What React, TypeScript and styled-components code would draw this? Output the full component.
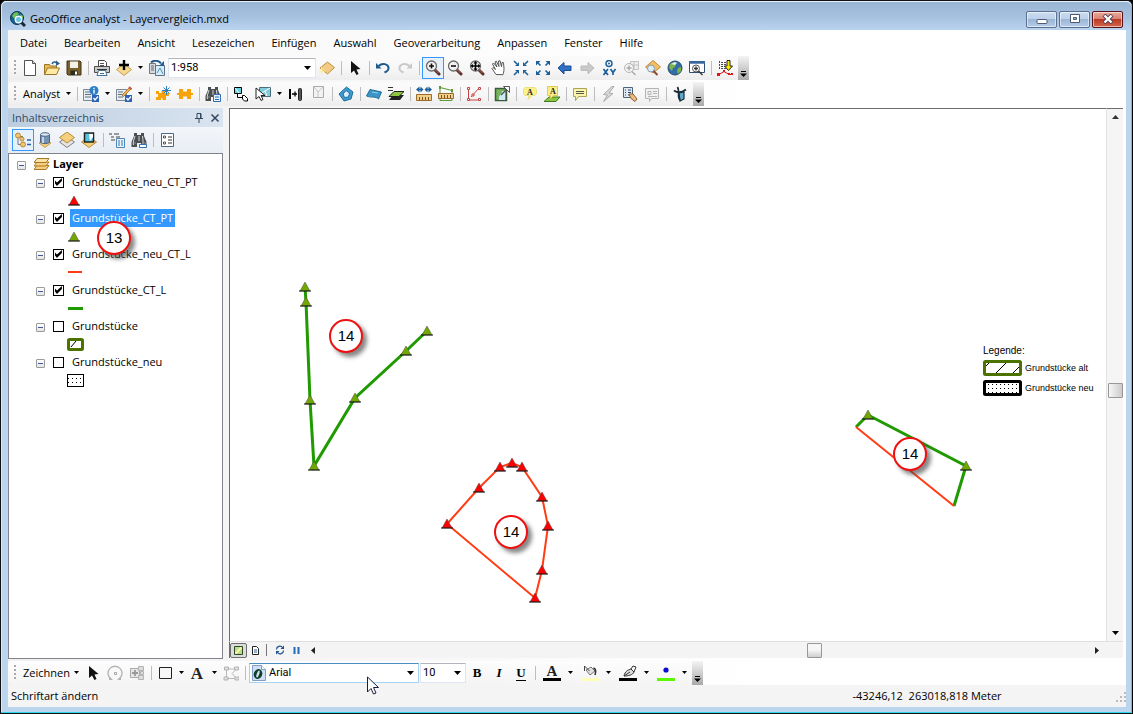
import React from "react";
import styled, { createGlobalStyle, css } from "styled-components";

const UI_FONT = `"Open Sans", "Noto Sans", sans-serif`;

const GlobalStyle = createGlobalStyle`
  *, *::before, *::after { box-sizing: border-box; }
  body { margin: 0; background: #000; font: 11px/16px ${UI_FONT}; color: #000; }
  button, select, input { font: inherit; color: inherit; margin: 0; }
  svg { display: block; flex: none; }
`;

/* ---------- window frame ---------- */

const Window = styled.div`
  display: flex;
  flex-direction: column;
  min-height: 100vh;
  padding: 0 6px 6px;
  border: 1px solid #111;
  border-right-color: #000;
  border-radius: 6px 6px 0 0;
  background: #bcd5ee;
  box-shadow: inset 0 1px 0 #e6f0fa, inset -1px -1px 0 #30d5ee, inset 1px 0 0 #dbe9f8;
`;

const TitleBar = styled.header`
  display: flex;
  align-items: center;
  gap: 4px;
  height: 29px;
  margin: 0 -5px;
  padding: 6px 6px 0 8px;
  border-radius: 5px 5px 0 0;
  border-top: 1px solid #e6f0fa;
  background: linear-gradient(#9bb6d5, #a5c0df 50%, #b9d3ef);
`;

const Title = styled.h1`
  flex: 1;
  margin: 0;
  font-size: 11px;
  font-weight: 400;
`;

const WindowButtons = styled.div`
  display: flex;
  gap: 2px;
  padding-right: 2px;
`;

const WindowButton = styled.button<{ $close?: boolean }>`
  display: grid;
  place-items: center;
  width: 31px;
  height: 17px;
  padding: 0;
  border: 1px solid ${(p) => (p.$close ? "#5a1018" : "#5b6f8e")};
  border-radius: 2px;
  box-shadow: inset 0 0 0 1px rgba(255, 255, 255, 0.55);
  background: ${(p) =>
    p.$close
      ? "linear-gradient(#e9a99b, #d88272 48%, #bb3b23 50%, #d2664e)"
      : "linear-gradient(#cbdcf0, #bcd0e8 48%, #9bb6d6 50%, #b5cde8)"};
`;

const Client = styled.div`
  display: flex;
  flex: 1;
  flex-direction: column;
  margin-left: 1px;
  background: linear-gradient(to right, #f0f0f0, #fff 68%);
`;

/* ---------- menu and toolbars ---------- */

const MenuBar = styled.nav`
  display: flex;
  align-items: center;
  height: 26px;
  padding-left: 3px;
  background: linear-gradient(to right, #f5f5f5, #fff 60%);
`;

const MenuItem = styled.button`
  padding: 0 8px 0 9px;
  border: 0;
  background: none;
`;

const Bar = styled.div`
  display: flex;
  align-items: center;
  align-self: flex-start;
  height: 24px;
  margin-bottom: 2px;
  border-radius: 4px 0 0 4px;
  background: linear-gradient(#fbfbfb, #f7f7f7 50%, #ededed);
`;

const Grip = styled.span`
  width: 2px;
  height: 16px;
  margin: 0 3px 0 6px;
  background: repeating-linear-gradient(#a9a9a9 0 2px, transparent 2px 4px);
`;

const Divider = styled.span`
  width: 1px;
  height: 14px;
  margin: 0 2px 0 3px;
  background: #bdbdbd;
`;

const ToolButton = styled.button<{ $active?: boolean; $wide?: boolean }>`
  display: grid;
  flex: none;
  place-items: center;
  width: ${(p) => (p.$wide ? 27 : 22)}px;
  height: 22px;
  padding: 0;
  border: 1px solid ${(p) => (p.$active ? "#3399ff" : "transparent")};
  background: ${(p) => (p.$active ? "#e6f1fb" : "none")};
`;

const DropButton = styled.button`
  display: grid;
  flex: none;
  place-items: center;
  width: 11px;
  height: 22px;
  padding: 0;
  border: 0;
  background: none;
`;

const TextMenu = styled.button<{ $wide?: boolean }>`
  display: flex;
  align-items: center;
  justify-content: space-between;
  width: ${(p) => (p.$wide ? 63 : 55)}px;
  height: 22px;
  padding: 0 2px 0 4px;
  border: 0;
  background: none;
`;

const OverflowButton = styled.button`
  display: grid;
  place-items: end center;
  width: 11px;
  height: 24px;
  margin-left: 2px;
  padding: 0 0 3px;
  border: 0;
  background: linear-gradient(#f4f4f4, #a9a9a9);
`;

const comboSizes = { scale: 148, font: 170, size: 46 };

const Combo = styled.label<{ $size: keyof typeof comboSizes; $hot?: boolean }>`
  position: relative;
  display: flex;
  align-items: center;
  width: ${(p) => comboSizes[p.$size]}px;
  height: 20px;
  margin-left: ${(p) => (p.$size === "scale" ? 0 : 1)}px;
  border: 1px solid ${(p) => (p.$hot ? "#a5d3f0" : "#dfe5f0")};
  border-top-color: ${(p) => (p.$hot ? "#4a8fc0" : "#b4b4bc")};
  background: #fff;
`;

const ComboSelect = styled.select<{ $indent?: boolean }>`
  width: 100%;
  height: 18px;
  padding: 0 14px 0 ${(p) => (p.$indent ? 19 : 2)}px;
  border: 0;
  appearance: none;
  background: none;
  outline: 0;
  font: 11px/16px Roboto, "Liberation Sans", sans-serif;
`;

const ComboArrow = styled.span`
  position: absolute;
  right: 4px;
  pointer-events: none;
`;

const ComboIcon = styled.span`
  position: absolute;
  left: 2px;
  pointer-events: none;
`;

const Pointer = styled.span`
  position: absolute;
  z-index: 3;
  top: 12px;
  left: 117px;
  pointer-events: none;
`;

const Letter = styled.span<{ $kind: "b" | "i" | "u" }>`
  font: bold 13px/14px "Liberation Serif", serif;
  ${(p) => p.$kind === "i" && css`font-style: italic;`}
  ${(p) => p.$kind === "u" && css`border-bottom: 1px solid #000;`}
`;

/* ---------- contents panel ---------- */

const Workspace = styled.main`
  display: flex;
  flex: 1;
  min-height: 300px;
`;

const Contents = styled.aside`
  display: flex;
  flex: none;
  flex-direction: column;
  width: 215px;
  margin: 0 6px 1px 0;
`;

const PanelHeader = styled.div`
  display: flex;
  align-items: center;
  gap: 6px;
  height: 19px;
  padding: 0 3px 0 4px;
  background: linear-gradient(to right, #bccde0, #d9e4f0);
  color: #2f4a6b;
`;

const PanelTitle = styled.h2`
  flex: 1;
  margin: 0;
  font-size: 11px;
  font-weight: 400;
`;

const PanelButton = styled.button`
  padding: 0;
  border: 0;
  background: none;
`;

const PanelTools = styled.div`
  display: flex;
  align-items: center;
  height: 26px;
  padding-left: 4px;
  background: linear-gradient(#f3f6fa, #e8edf4);
`;

const TreeBox = styled.div`
  flex: 1;
  padding-top: 1px;
  border: 1px solid #82848c;
  background: #fff;
`;

const List = styled.ul`
  margin: 0;
  padding: 0;
  list-style: none;
`;

const TreeRow = styled.div<{ $level: number }>`
  display: flex;
  align-items: center;
  height: 18px;
  padding-left: ${(p) => (p.$level ? 27 : 8)}px;
`;

const Expander = styled.button`
  position: relative;
  width: 9px;
  height: 9px;
  margin: 2px 8px 0 0;
  padding: 0;
  border: 1px solid #9a9a9a;
  border-radius: 1px;
  background: linear-gradient(#fff, #e4e4e4);
  &::after {
    content: "";
    position: absolute;
    inset: 3px 1px;
    background: #3c5a9c;
  }
`;

const Check = styled.input`
  width: 11px;
  height: 11px;
  border: 1px solid #000;
  appearance: none;
  background: #fff;
  &:checked::before {
    content: "";
    display: block;
    width: 9px;
    height: 9px;
    background: #000;
    clip-path: polygon(11% 33%, 33% 55%, 88% 5%, 88% 38%, 33% 95%, 11% 66%);
  }
`;

const LayerName = styled.label<{ $selected?: boolean }>`
  height: 18px;
  margin-left: 6px;
  padding: 0 2px;
  line-height: 17px;
  background: ${(p) => (p.$selected ? "#3399ff" : "none")};
  color: ${(p) => (p.$selected ? "#fff" : "#000")};
`;

const GroupName = styled.strong`
  margin-left: 3px;
  font-weight: 700;
`;

const SymbolRow = styled.div`
  display: flex;
  align-items: center;
  height: 18px;
  padding-left: 58px;
`;

/* ---------- map ---------- */

const MapPane = styled.section`
  display: flex;
  flex: 1;
  flex-direction: column;
  min-width: 0;
  margin: 0 3px 2px 0;
`;

const MapRow = styled.div`
  display: flex;
  flex: 1;
`;

const MapCanvas = styled.div`
  position: relative;
  flex: 1;
  overflow: hidden;
  border: solid #6d6d6d;
  border-width: 1px 0 0 1px;
  background: #fff;
`;

const Callout = styled.span<{ $x: number; $y: number }>`
  position: absolute;
  z-index: 2;
  left: ${(p) => p.$x - 17}px;
  top: ${(p) => p.$y - 17}px;
  width: 34px;
  height: 34px;
  border: 2px solid #ee1111;
  border-radius: 50%;
  background: #fff;
  box-shadow: 4px 4px 4px rgba(70, 70, 70, 0.65);
  font: 15px/30px "Liberation Sans", Arial, sans-serif;
  text-align: center;
`;

const TreeAnchor = styled.div`
  position: relative;
`;

const Legend = styled.div`
  position: absolute;
  left: 753px;
  top: 235px;
  font: 10px/14px "Liberation Sans", Arial, sans-serif;
`;

const LegendRow = styled.div`
  display: flex;
  align-items: center;
  gap: 3px;
  height: 20px;
  font-size: 9px;
`;

const VScroll = styled.div`
  display: flex;
  flex-direction: column;
  align-items: center;
  width: 17px;
  border-top: 1px solid #6d6d6d;
  border-left: 1px solid #e3e3e3;
  background: #f5f5f5;
`;

const MapFooter = styled.div`
  display: flex;
  align-items: center;
  height: 17px;
  border-top: 1px solid #e0e0e0;
  border-left: 1px solid #6d6d6d;
  background: #f4f4f4;
`;

const ScrollArrow = styled.button`
  display: grid;
  place-items: center;
  width: 16px;
  height: 16px;
  padding: 0;
  border: 0;
  background: none;
`;

const ScrollCorner = styled.span`
  width: 18px;
`;

const Track = styled.span<{ $grow: number }>`
  flex: ${(p) => p.$grow} 1 0;
`;

const Thumb = styled.button<{ $vertical?: boolean }>`
  width: 15px;
  height: 15px;
  padding: 0;
  border: 1px solid #979797;
  border-radius: 1px;
  background: ${(p) =>
    p.$vertical ? "linear-gradient(to right, #f6f6f6, #ccccd0)" : "linear-gradient(#f6f6f6 45%, #cfcfd2)"};
`;

const ViewButton = styled.button<{ $active?: boolean }>`
  display: grid;
  place-items: center;
  width: 17px;
  height: 15px;
  padding: 0;
  border: 1px solid ${(p) => (p.$active ? "#6e6e6e" : "transparent")};
  border-radius: 2px;
  background: ${(p) => (p.$active ? "#dcdcdc" : "none")};
`;

const FooterDivider = styled.span`
  width: 1px;
  height: 12px;
  margin: 0 4px 0 2px;
  background: #777;
`;

/* ---------- status ---------- */

const DrawBar = styled(Bar)`
  margin-top: 1px;
  margin-bottom: 0;
  background: linear-gradient(#fdfdfd, #f4f4f4);
`;

const StatusBar = styled.footer`
  display: flex;
  align-items: center;
  height: 22px;
  padding: 0 0 0 3px;
  background: #f4f4f4;
`;

const StatusText = styled.span`
  flex: 843 1 0;
`;

const Coordinates = styled.output`
  flex: 263 1 0;
  white-space: pre;
`;

/* ---------- icons ---------- */

const Svg = ({ children, w = 16, h = 16 }: { children: React.ReactNode; w?: number; h?: number }) => (
  <svg width={w} height={h} viewBox={`0 0 ${w} ${h}`} fill="none" aria-hidden="true">
    {children}
  </svg>
);

const Down = ({ small }: { small?: boolean }) => (
  <Svg w={7} h={4}>
    <path d={small ? "M1 0h5L3.500 3z" : "M0 0h7L3.500 4z"} fill="#000" />
  </Svg>
);

const lens = (sign: React.ReactNode) => (
  <Svg>
    <path d="M9.500 9.500l4.500 4.500" stroke="#5d2f26" strokeWidth="3" strokeLinecap="round" />
    <path d="M10 9.500l3.500 3.500" stroke="#b06a58" strokeWidth="1" />
    <circle cx="6.500" cy="6" r="5" fill="#f2f2f2" stroke="#6a6a6a" strokeWidth="1.300" />
    {sign}
  </Svg>
);

const Binoculars = () => (
  <>
    <path d="M3 1h3v2h4V1h3v3l2.500 6v5H10v-4H6v4H.5v-5L3 4z" fill="#4b4f52" />
    <path d="M4 4L2.500 9v4M11.500 4L12 9v4M8 4v5" stroke="#d5d8da" />
    <path d="M1 11h4M11 11h4" stroke="#8d9193" />
  </>
);

const CheckBadge = () => (
  <>
    <path d="M9 9h7v7H9z" fill="#2d63b5" />
    <path d="M10.500 12l1.500 2 3-3.500" stroke="#fff" strokeWidth="1.300" />
  </>
);

const LetterA = ({ x, y, size }: { x: number; y: number; size: number }) => (
  <text x={x} y={y} fontFamily="Liberation Serif, serif" fontWeight="700" fontSize={size} textAnchor="middle" fill="#222">
    A
  </text>
);

const icons: Record<string, React.ReactNode> = {
  app: (
    <Svg>
      <circle cx="7" cy="7" r="6.500" fill="#14628f" stroke="#0b3350" />
      <path d="M2 5l2-3 3-1 2 2-3 2-1 3zM10 3l3 2 0 3-2-2z" fill="#6fc04a" />
      <path d="M11 11l4 4" stroke="#1c2733" strokeWidth="3" />
      <circle cx="8.500" cy="8.500" r="3.200" fill="#6bbfe6" stroke="#eef7fb" strokeWidth="1.400" />
    </Svg>
  ),
  fresh: (
    <Svg>
      <path d="M2.500.5h8l3 3v12h-11z" fill="#fff" stroke="#4f5358" />
      <path d="M10.500.5v3h3" stroke="#4f5358" fill="#d9dde2" />
    </Svg>
  ),
  open: (
    <Svg>
      <path d="M.5 14.500v-10h5l1 1.500h6v3" fill="#e8bd57" stroke="#9b7425" />
      <path d="M.5 14.500l3-6.500h12l-3 6.500z" fill="#ffe9a3" stroke="#9b7425" />
      <path d="M8 4c1-2.500 3-2.500 5-1" stroke="#2c5f8d" strokeWidth="1.500" />
      <path d="M12 .5l4 3-4 2.500z" fill="#2c5f8d" />
    </Svg>
  ),
  save: (
    <Svg>
      <path d="M1 1h13l1 1v13H2l-1-1z" fill="#77632a" stroke="#3c3214" />
      <path d="M4 1.500h8V8H4z" fill="#f5f2ea" />
      <path d="M4.500 10.500h7V15h-7z" fill="#2e2a20" />
      <path d="M9 11.500h2v3H9z" fill="#fff" />
    </Svg>
  ),
  print: (
    <Svg>
      <path d="M4.500 6.500v-6h6l2 2v4" fill="#fff" stroke="#444" />
      <path d="M6 3.500h4M6 5.500h4" stroke="#555" />
      <path d="M.5 6.500h15v6H.5z" fill="#c9c9c5" stroke="#4c4c4c" />
      <path d="M3 9.500h10" stroke="#333" />
      <path d="M4.500 10.500h7l1.500 5H3z" fill="#fff" stroke="#3f6f95" />
      <path d="M6 13.500h4" stroke="#3f6f95" />
    </Svg>
  ),
  addData: (
    <Svg>
      <path d="M8 4l7.500 5.500L8 15.500.5 9.500z" fill="#f6d78e" stroke="#c7a053" />
      <path d="M8 0v10M3 5h10" stroke="#000" strokeWidth="2.400" />
    </Svg>
  ),
  scale: (
    <Svg>
      <path d="M.5 3.500h6v10h-6z" fill="#d5dbe0" stroke="#777" />
      <path d="M6.500 5.500h9v10h-9z" fill="#d8ecf8" stroke="#5c7285" />
      <path d="M2 2.500c3-3 8-2 10 1" stroke="#215d92" strokeWidth="2" />
      <path d="M15 1v5h-5z" fill="#215d92" />
      <path d="M2 6h3M2 8h3M2 10h3" stroke="#666" />
      <path d="M8 13l3-5 3 6" stroke="#4c90bd" />
    </Svg>
  ),
  layer: (
    <Svg>
      <path d="M8.500 2l7 5.500-7 6.500L1 8z" fill="#f1ca83" stroke="#c08f42" />
      <path d="M2.500 7v8M-1 11h7M0 8.500l5 5M5 8.500l-5 5" stroke="#ffef9c" />
    </Svg>
  ),
  pointer: (
    <Svg>
      <path d="M4 1v12l3-2.500L9.500 15l2-1L9.500 9.500l4-.5z" fill="#111" />
    </Svg>
  ),
  undo: (
    <Svg>
      <path d="M3.500 6C8 2 13 4.500 13.500 7.500c.3 2-1.500 4-4 5" stroke="#1d5a8c" strokeWidth="2" />
      <path d="M1 3v5.500h5.500z" fill="#1d5a8c" />
    </Svg>
  ),
  redo: (
    <Svg>
      <path d="M12.500 6C8 2 3 4.500 2.500 7.500c-.3 2 1.500 4 4 5" stroke="#c9c9c9" strokeWidth="2" />
      <path d="M15 3v5.500H9.500z" fill="#c9c9c9" />
    </Svg>
  ),
  zoomIn: lens(<path d="M6.500 3.500v5M4 6h5" stroke="#111" strokeWidth="1.600" />),
  zoomOut: lens(<path d="M4 6h5" stroke="#111" strokeWidth="1.600" />),
  zoomPan: lens(
    <>
      <path d="M6.500 2v8M2.500 6h8" stroke="#000" strokeWidth="1.500" />
      <path d="M4.500 3.500l2-2.500 2 2.500zM4.500 8.500l2 2.500 2-2.500zM4 4L1.500 6 4 8zM9 4l2.500 2L9 8z" fill="#000" />
    </>
  ),
  hand: (
    <Svg>
      <path
        d="M5 14.500L1 8.500l1-1 2.500 2L1.500 4l1-1 3.500 4L4 2l1.300-.8L8 6.500 7.500 1l1.500-.3 1.500 6L11 2.500l1.500.2.500 6c0 3-.5 4-1 6z"
        fill="#fff"
        stroke="#555"
      />
    </Svg>
  ),
  shrink: (
    <Svg>
      <path d="M6 2v4H2zM10 2v4h4zM6 14v-4H2zM10 14v-4h4z" fill="#1d5f98" />
      <path d="M1 1l3 3M15 1l-3 3M1 15l3-3M15 15l-3-3" stroke="#1d5f98" strokeWidth="1.600" />
    </Svg>
  ),
  expand: (
    <Svg>
      <path d="M1 5.500V1h4.500zM15 5.500V1h-4.500zM1 10.500V15h4.500zM15 10.500V15h-4.500z" fill="#1d5f98" />
      <path d="M2 2l3.500 3.500M14 2l-3.500 3.500M2 14l3.500-3.500M14 14l-3.500-3.500" stroke="#1d5f98" strokeWidth="1.600" />
    </Svg>
  ),
  back: (
    <Svg>
      <path d="M1 8l6-5.500V6h7v4.500H7V14z" fill="#2f6fc4" stroke="#1a4c92" />
    </Svg>
  ),
  forward: (
    <Svg>
      <path d="M15 8L9 2.500V6H2v4.500h7V14z" fill="#c9c9c9" stroke="#bcbcbc" />
    </Svg>
  ),
  xy: (
    <Svg>
      <circle cx="8" cy="3.500" r="3" stroke="#1d5f98" strokeWidth="1.500" />
      <circle cx="8" cy="3.500" r="1" fill="#1d5f98" />
      <path d="M2.500 9l4.500 6M7 9l-4.500 6M9.500 9l2.500 3.500L14.500 9M12 12v3" stroke="#1d5f98" strokeWidth="1.700" />
    </Svg>
  ),
  magGray: (
    <Svg>
      <path d="M7.500 1.500h8v8h-8z" fill="#eee" stroke="#c2c2c2" />
      <path d="M11 2v7M8 5h7" stroke="#c2c2c2" />
      <circle cx="6" cy="8" r="4.500" fill="#f5f5f5" stroke="#b5b5b5" />
      <path d="M6 5.500v5M3.500 8h5M9 11.500l3.500 3.500" stroke="#a9a9a9" strokeWidth="1.500" />
    </Svg>
  ),
  magLayer: (
    <Svg>
      <path d="M8 .5l7.500 6.500L8 13 .5 7z" fill="#f3bf62" stroke="#c08a35" />
      <circle cx="6" cy="8.500" r="3.500" fill="#d6effc" stroke="#8a9aa5" />
      <path d="M8.500 11l4 4" stroke="#8b4a37" strokeWidth="2" />
    </Svg>
  ),
  globe: (
    <Svg>
      <circle cx="8" cy="8" r="7" fill="#2f6da6" stroke="#2a4a66" />
      <path d="M3 4l4-2 2 2-1 3-2 1-1 3-3-3zM11 8l3-1v4l-3 3-1-3z" fill="#7db34e" />
      <path d="M4 4l4-2 2 1-2 2z" fill="#e6f0e6" />
    </Svg>
  ),
  magWindow: (
    <Svg>
      <path d="M.5 1.500h15v11H.5z" fill="#fff" stroke="#2f4f74" />
      <path d="M0 2.500h16" stroke="#3a6aa0" strokeWidth="2.500" />
      <circle cx="7" cy="8.500" r="3.500" fill="#fff" stroke="#555" />
      <path d="M7 6.500v4M5 8.500h4M9.500 11l4 4" stroke="#333" strokeWidth="1.400" />
    </Svg>
  ),
  edit: (
    <Svg>
      <path d="M2.500 1v9M4 2.500h5M4 4.500h5M4 6.500h5M4 8.500h5" stroke="#4a4a4a" strokeDasharray="2 1" />
      <path d="M10 .5h3V6h2.500l-4 4.500L7.500 6H10z" fill="#ffe800" stroke="#222" />
      <path d="M2 14.500l5-3 5 3h3" stroke="#e01414" />
      <path d="M0 13h3v3H0zM6 10h2v2H6zM11 13h2v2h-2zM14 13h2v2h-2z" fill="#e01414" />
    </Svg>
  ),
  listInfo: (
    <Svg>
      <path d="M.5 3.500h9v11h-9z" fill="#e8edf2" stroke="#7a8896" />
      <path d="M2 6h5M2 8.500h6M2 11h6" stroke="#60707e" />
      <CheckBadge />
      <circle cx="11" cy="4.500" r="4.500" fill="#2a7fc9" />
      <path d="M11 4v3.500M11 1.800v1.400" stroke="#fff" strokeWidth="1.400" />
    </Svg>
  ),
  listEdit: (
    <Svg>
      <path d="M.5 3.500h10v11H.5z" fill="#e8edf2" stroke="#7a8896" />
      <path d="M2 6h5M2 8.500h4M2 11h5" stroke="#60707e" />
      <CheckBadge />
      <path d="M6 9L14 1l1.500 1.500-8 8z" fill="#f2b844" stroke="#9a6b2f" strokeWidth=".8" />
      <path d="M13 1l2.500 2.500" stroke="#d0574c" strokeWidth="2" />
    </Svg>
  ),
  puzzleNew: (
    <Svg>
      <path d="M1 5h3v2h2.500V5H10v2h4v3h-3v4H7.500v-2H6v2H1v-3h2V8H1z" fill="#f7a30c" />
      <path d="M11.500 0v9M7 4.500h9M8.500 1.500l6 6M14.500 1.500l-6 6" stroke="#2d82c2" />
    </Svg>
  ),
  puzzle: (
    <Svg>
      <path d="M2 3h4v2.500h4V3h4v4h2v2h-2v4h-4v-2.500H6V13H2V9H0V7h2z" fill="#f7a30c" />
    </Svg>
  ),
  binocularsList: (
    <Svg>
      <Binoculars />
      <path d="M8.500 8.500h7v7h-7z" fill="#e5f1fb" stroke="#2f6fb3" />
      <path d="M10 11h4M10 13.500h4" stroke="#2f6fb3" />
    </Svg>
  ),
  copyShape: (
    <Svg>
      <path d="M1.500 1.500h7v6h-7z" fill="#63d5e2" stroke="#000" />
      <path d="M2 2l4 5" stroke="#fff" />
      <path d="M4.500 8v3.500H9" stroke="#000" />
      <path d="M9.500 9.500h2l3 3v2.500h-3l-2-2z" fill="#fff" stroke="#000" />
    </Svg>
  ),
  selectShape: (
    <Svg>
      <path d="M4.500 1.500h11v9h-11z" fill="#7ecbdd" stroke="#4f6e7c" />
      <path d="M5 8l5-3 5-3M10 5l2 5" stroke="#fff" />
      <path d="M1 2v11l3-2.500 2 4 2-1-2-4h4z" fill="#fff" stroke="#222" />
    </Svg>
  ),
  between: (
    <Svg>
      <path d="M2 3v10" stroke="#000" strokeWidth="2" />
      <path d="M4 8h5M7 5.500v5" stroke="#000" strokeWidth="1.300" />
      <rect x="10" y="2" width="4" height="13" rx="2" fill="#222" />
      <path d="M12 3v11" stroke="#888" />
    </Svg>
  ),
  shapeGray: (
    <Svg>
      <path d="M3.500.5h10v11h-10z" fill="#f3f3f3" stroke="#aaa" />
      <path d="M4 1l4 5 5-5M8 6v5" stroke="#c4c4c4" />
    </Svg>
  ),
  polygon: (
    <Svg>
      <path d="M8.500 1l6.500 5-2 7-7 2-5-7z" fill="#3d9bd0" stroke="#1f6d9f" />
      <path d="M8 4.500l3.500 2.500-1 4-4 .500-1.500-3.500z" fill="#d9f0fb" stroke="#1f6d9f" />
    </Svg>
  ),
  surface: (
    <Svg>
      <path d="M4 3.500l11.500 2.500-3 7c-3-3-7-1-12-3z" fill="#3c95c4" stroke="#1e6f9d" />
      <path d="M6 6l6 1" stroke="#8fd0ee" />
    </Svg>
  ),
  stack: (
    <Svg>
      <path d="M0 1.500h5M0 4.500h5" stroke="#333" />
      <path d="M5 9h11l-4 5H1z" fill="#222" />
      <path d="M6 5.500h10l-5 5H1z" fill="#8cc63f" stroke="#1c1c1c" />
    </Svg>
  ),
  measure: (
    <Svg>
      <path d="M3 3.500h2M11 3.500h2" stroke="#1d5f98" strokeWidth="1.500" />
      <path d="M0 3.500L3.500.5v6zM7.500 3.500L4.500.5v6zM8.500 3.500l3-3v6zM16 3.500l-3.500-3v6z" fill="#1d5f98" />
      <path d="M.5 8.500h15v6H.5z" fill="#f1cf86" stroke="#9a6b2f" />
      <path d="M3.500 11v3M6.500 11v3M9.500 11v3M12.500 11v3" stroke="#7c5220" />
    </Svg>
  ),
  measureArea: (
    <Svg>
      <path d="M2 1.500l12 3v10H2z" stroke="#5c9a38" />
      <path d="M1 0h2v3H1zM13 3h2v3h-2z" fill="#5c9a38" />
      <path d="M.5 7.500h15v5H.5z" fill="#f1cf86" stroke="#9a6b2f" />
      <path d="M3.500 9v3M6.500 9v3M9.500 9v3M12.500 9v3" stroke="#7c5220" />
    </Svg>
  ),
  vertices: (
    <Svg>
      <path d="M2.500 2v12h11M5 11l8-9" stroke="#c74444" />
      <path d="M1.500 1.500h2v2h-2zM1.500 12.500h2v2h-2zM12.500 1.500h2v2h-2zM12.500 12.500h2v2h-2zM6 8h2v2H6z" fill="#fff" stroke="#c74444" />
    </Svg>
  ),
  mapArrow: (
    <Svg>
      <path d="M1.500 2.500h11v12h-11z" fill="#76b35d" stroke="#3c5b3c" strokeWidth="1.500" />
      <path d="M5 14c-1-5 3-5 3-9h3v9z" fill="#cfe9f7" />
      <path d="M7 9l7-7" stroke="#555" strokeWidth="1.500" />
      <path d="M9.500.5h6v6z" fill="#fff" stroke="#555" />
    </Svg>
  ),
  note: (
    <Svg>
      <path d="M3 1.500h10l1.500 2v4l-1.500 2h-3l-4 4 1-4H3l-1.500-2v-4z" fill="#fbf08a" stroke="#eadf7a" />
      <LetterA x={8} y={9} size={8} />
    </Svg>
  ),
  noteMap: (
    <Svg>
      <path d="M5 11h11l-4 4.500H0z" fill="#8cc63f" stroke="#3f7a1d" />
      <path d="M3.500.5h10v9h-4l-3 3v-3h-3z" fill="#fbf08a" stroke="#dccb57" />
      <LetterA x={9} y={8} size={8} />
    </Svg>
  ),
  comment: (
    <Svg>
      <path d="M1.500 2.500h13v8h-8l-3 4v-4h-2z" fill="#fbf5a8" stroke="#aaa35a" />
      <path d="M4 5.500h8M4 7.500h8" stroke="#555" />
    </Svg>
  ),
  bolt: (
    <Svg>
      <path d="M12 .5L3.500 8.500l4 .5-4 6.500L13 7.500 9 7l5-6.500z" fill="#d9d9d9" stroke="#aaa" />
    </Svg>
  ),
  form: (
    <Svg>
      <path d="M1.500 1.500h9v10h-9z" fill="#dfe9f2" stroke="#4c6378" />
      <path d="M3 4h1M6 4h3M3 6.500h1M6 6.500h3M3 9h1M6 9h3" stroke="#2f4d68" />
      <path d="M7 8l4 0 4 5-2 2.500-4-3z" fill="#e9bd83" stroke="#8c5f31" />
    </Svg>
  ),
  html: (
    <Svg>
      <path d="M1.500 2.500h13v10h-7l-2 3v-3h-4z" fill="#f1f1f1" stroke="#b5b5b5" />
      <path d="M4 5.500h3v3H4zM9 5.500h4M9 7.500h4M4 10.500h9" stroke="#b5b5b5" />
    </Svg>
  ),
  gps: (
    <Svg>
      <path d="M7 7l5-1v7l-4 2z" fill="#5da9cf" stroke="#1b2b38" strokeWidth="1.200" />
      <path d="M8 14C5 11 8 5 5.500 1M2 4.500c4 3 8 2 12-1" stroke="#1b2b38" strokeWidth="1.800" />
    </Svg>
  ),
  tocOrder: (
    <Svg>
      <path d="M3 6v6.500h4M5 4.500h3" stroke="#6f7a85" />
      <circle cx="3" cy="3.500" r="2.500" fill="#f2c573" stroke="#b98a35" />
      <circle cx="7" cy="7" r="2" fill="#f2c573" stroke="#b98a35" />
      <circle cx="8" cy="12.500" r="2.500" fill="#f2c573" stroke="#b98a35" />
      <path d="M12 8h4M12 12.500h4" stroke="#2d62a0" strokeWidth="1.500" />
    </Svg>
  ),
  tocSource: (
    <Svg>
      <path d="M8 8l6 3-6 4.500L2 11z" fill="#f4cf7e" stroke="#c7a053" />
      <path d="M3.500 2.500v8c2 1.500 7 1.500 9 0v-8z" fill="#7592b5" stroke="#4c6584" />
      <ellipse cx="8" cy="2.500" rx="4.500" ry="1.800" fill="#dfe8f1" stroke="#4c6584" />
      <path d="M6 5v6" stroke="#c5d5e6" strokeWidth="2" />
    </Svg>
  ),
  tocVisible: (
    <Svg>
      <path d="M8 5l7.500 5L8 15.500.5 10z" fill="#e4e4e4" stroke="#808080" />
      <path d="M8 0l7.500 5.500L8 11 .5 5.500z" fill="#f4cf7e" stroke="#b98a35" />
    </Svg>
  ),
  tocSelect: (
    <Svg>
      <path d="M8 5l7.500 5L8 15.500.5 10z" fill="#f4cf7e" stroke="#b98a35" />
      <path d="M3.500 1h9v9h-9z" fill="#53c5df" stroke="#222" strokeWidth="1.500" />
      <path d="M8 2h4v3l-3 4z" fill="#fff" />
    </Svg>
  ),
  tocGray: (
    <Svg>
      <path d="M0 2h3M5 2h5M2 5h3M7 5h4M2 8h4" stroke="#9a9a9a" strokeWidth="2" />
      <path d="M7.500 6.500h8v9h-8z" fill="#eaf3fb" stroke="#4b87bb" />
      <path d="M9 9h2M9 11h2M9 13h2M12 9h2M12 11h2M12 13h2" stroke="#3477b0" />
    </Svg>
  ),
  tocFind: (
    <Svg>
      <Binoculars />
      <path d="M8.500 12.500h7v3h-7z" fill="#fff" stroke="#2f6fb3" />
    </Svg>
  ),
  tocOptions: (
    <Svg>
      <path d="M2.500 1.500h12v13h-12z" fill="#fff" stroke="#4c6584" />
      <path d="M4.500 4h2v2h-2zM4.500 10h2v2h-2z" stroke="#333" strokeWidth=".8" />
      <path d="M9 5h4M9 11h4M9 8h4" stroke="#333" />
    </Svg>
  ),
  rotate: (
    <Svg>
      <path d="M4 14A7 7 0 1 1 12 14" stroke="#b3b3b3" strokeWidth="1.300" />
      <path d="M2 11v4h4zM14 11v4h-4z" fill="#b3b3b3" />
      <path d="M7.500 7.500h2v2h-2z" stroke="#a5a5a5" />
    </Svg>
  ),
  group: (
    <Svg>
      <path d="M1.500 3.500h9v9h-9z" fill="#e6e6e6" stroke="#aaa" />
      <path d="M9.500 1.500h5v4h-5zM9.500 10.500h5v4h-5zM11.500 6.500h3v3h-3z" fill="#ddd" stroke="#b3b3b3" />
      <path d="M6 5v6M3 8h6" stroke="#999" strokeWidth="1.800" />
    </Svg>
  ),
  rectangle: (
    <Svg>
      <path d="M2.500 2.500h12v11h-12z" fill="#f6f6f6" stroke="#222" />
    </Svg>
  ),
  textA: (
    <Svg>
      <LetterA x={7} y={14} size={17} />
    </Svg>
  ),
  vertexGray: (
    <Svg>
      <path d="M3.500 13V4h10L9 8.500l4.500 5H3.500" stroke="#b9b9b9" />
      <path d="M1 12h4v3H1zM1.500 2h4v3h-4zM11.500 2h4v3h-4zM12 12h4v3h-4z" fill="#e0e0e0" stroke="#b3b3b3" />
    </Svg>
  ),
  fontColor: (
    <Svg w={18}>
      <LetterA x={9} y={11} size={15} />
      <path d="M0 13h18v3H0z" fill="#000" />
    </Svg>
  ),
  fillColor: (
    <Svg w={18}>
      <path d="M5 5l5-3 4 4-5 4z" fill="#e0e0e0" stroke="#777" />
      <path d="M3.500 1l5 5M3.500 1v5" stroke="#444" />
      <path d="M12.500 3c2.500 1 2.500 4 1.500 7" stroke="#333" strokeWidth="1.600" />
      <path d="M0 13h18v3H0z" fill="#ffffb8" />
    </Svg>
  ),
  lineColor: (
    <Svg w={18}>
      <path d="M5 11c1-5 4-6 7-7l3 3c-1 3-6 4-10 4z" fill="#ddd" stroke="#333" />
      <path d="M12 4l2-3 3 1-2 5M5 11l6-4" stroke="#333" />
      <path d="M0 13h18v3H0z" fill="#000" />
    </Svg>
  ),
  markerColor: (
    <Svg w={18}>
      <circle cx="9" cy="5" r="2.600" fill="#0a0ad0" />
      <path d="M0 13h18v3H0z" fill="#5cf800" />
    </Svg>
  ),
  openType: (
    <Svg w={14}>
      <path d="M.5.500h9l4 4v11H.5z" fill="#cfe0f3" stroke="#7f9fc6" />
      <path d="M9.500.5v4h4" fill="#fff" stroke="#7f9fc6" />
      <ellipse cx="6" cy="9" rx="4.200" ry="5" transform="rotate(20 6 9)" fill="#123f2c" />
      <ellipse cx="6" cy="9" rx="1.200" ry="3.600" transform="rotate(20 6 9)" fill="#cfe0f3" />
    </Svg>
  ),
  layers: (
    <Svg>
      <path d="M3 9.500h12l-3 4H0z" fill="#f4cf7e" stroke="#a87625" />
      <path d="M3 6h12l-3 4H0z" fill="#f4cf7e" stroke="#a87625" />
      <path d="M3 2.500h12l-3 4H0z" fill="#fbe3a8" stroke="#a87625" />
    </Svg>
  ),
};

/* "|" is a divider, "v" is the drop arrow of the icon before it */
type Tool = [icon: string, label: string] | "|" | "v";

const Tools = ({ items, active, wide }: { items: Tool[]; active?: string; wide?: boolean }) => (
  <>
    {items.map((item, i) => {
      if (item === "|") return <Divider key={i} />;
      if (item === "v")
        return (
          <DropButton key={i} aria-label="Auswahl öffnen">
            <Down small />
          </DropButton>
        );
      const [icon, label] = item;
      return (
        <ToolButton key={i} $active={icon === active} $wide={wide} aria-label={label} title={label}>
          {icons[icon]}
        </ToolButton>
      );
    })}
  </>
);

const Overflow = () => (
  <OverflowButton aria-label="Symbolleistenoptionen">
    <Svg w={7} h={7}>
      <path d="M1 1h5v1H1zM0 3.500h7L3.500 7z" fill="#000" />
    </Svg>
  </OverflowButton>
);

const menus = [
  "Datei",
  "Bearbeiten",
  "Ansicht",
  "Lesezeichen",
  "Einfügen",
  "Auswahl",
  "Geoverarbeitung",
  "Anpassen",
  "Fenster",
  "Hilfe",
];

const fileTools: Tool[] = [
  ["fresh", "Neu"],
  ["open", "Öffnen"],
  ["save", "Speichern"],
  "|",
  ["print", "Drucken"],
  ["addData", "Daten hinzufügen"],
  "v",
  ["scale", "Maßstab"],
];

const navTools: Tool[] = [
  ["layer", "Basisdaten"],
  "|",
  ["pointer", "Elemente auswählen"],
  "|",
  ["undo", "Rückgängig"],
  ["redo", "Wiederholen"],
  "|",
  ["zoomIn", "Vergrößern"],
  ["zoomOut", "Verkleinern"],
  ["zoomPan", "Zoomen und Schwenken"],
  ["hand", "Schwenken"],
  ["shrink", "Fest verkleinern"],
  ["expand", "Fest vergrößern"],
  ["back", "Zurück"],
  ["forward", "Vor"],
  ["xy", "Gehe zu XY"],
  ["magGray", "Auf Auswahl zoomen"],
  ["magLayer", "Auf Layer zoomen"],
  ["globe", "Volle Ausdehnung"],
  ["magWindow", "Lupenfenster"],
  "|",
  ["edit", "Editor"],
];

const analystTools: Tool[] = [
  "|",
  ["listInfo", "Information"],
  "v",
  ["listEdit", "Bearbeiten"],
  "v",
  "|",
  ["puzzleNew", "Neues Modul"],
  ["puzzle", "Modul"],
  "|",
  ["binocularsList", "Suchen"],
  "|",
  ["copyShape", "Form kopieren"],
  ["selectShape", "Form auswählen"],
  "v",
  ["between", "Abstand"],
  ["shapeGray", "Form"],
  "|",
  ["polygon", "Polygon"],
  "|",
  ["surface", "Fläche"],
  ["stack", "Layerstapel"],
  "|",
  ["measure", "Strecke messen"],
  ["measureArea", "Fläche messen"],
  "|",
  ["vertices", "Stützpunkte"],
  "|",
  ["mapArrow", "Karte exportieren"],
  "|",
  ["note", "Notiz"],
  ["noteMap", "Kartennotiz"],
  "|",
  ["comment", "Kommentar"],
  "|",
  ["bolt", "Hyperlink"],
  ["form", "Formular"],
  ["html", "HTML-Popup"],
  "|",
  ["gps", "GPS"],
];

const tocTools: Tool[] = [
  ["tocOrder", "Nach Zeichnungsreihenfolge"],
  ["tocSource", "Nach Quelle"],
  ["tocVisible", "Nach Sichtbarkeit"],
  ["tocSelect", "Nach Auswahl"],
  "|",
  ["tocGray", "Gruppieren"],
  ["tocFind", "Suchen"],
  "|",
  ["tocOptions", "Optionen"],
];

const drawTools: Tool[] = [
  ["pointer", "Elemente auswählen"],
  ["rotate", "Drehen"],
  ["group", "Gruppieren"],
  "|",
  ["rectangle", "Rechteck"],
  "v",
  ["textA", "Text"],
  "v",
  ["vertexGray", "Stützpunkte bearbeiten"],
  "|",
];

const colorTools: Tool[] = [
  ["fontColor", "Schriftfarbe"],
  "v",
  ["fillColor", "Füllfarbe"],
  "v",
  ["lineColor", "Linienfarbe"],
  "v",
  ["markerColor", "Markerfarbe"],
  "v",
];

const RED = "#fe0000";
const GREEN = "#70a800";

const Marker = ({ x, y, fill }: { x: number; y: number; fill: string }) => (
  <>
    <path d={`M${x} ${y - 5}l5 9h-10z`} fill={fill} stroke="#4a4a4a" strokeWidth=".5" />
    <path d={`M${x - 6} ${y + 4}h12`} stroke="#111" />
  </>
);

const Swatch = ({ kind, large }: { kind: "hatch" | "dots"; large?: boolean }) => {
  const w = large ? 39 : 17;
  const h = large ? 16 : 13;
  const thick = large || kind === "hatch";
  const line = thick ? 3 : 1;
  const id = `dots-${large ? "large" : "small"}`;
  return (
    <Svg w={w} h={h}>
      <defs>
        <pattern id={id} width="4" height="4" patternUnits="userSpaceOnUse">
          <path d="M1 0h1v1H1z" fill="#000" />
        </pattern>
      </defs>
      <rect
        x={line / 2}
        y={line / 2}
        width={w - line}
        height={h - line}
        rx={thick ? 1 : 0}
        fill={kind === "dots" ? `url(#${id})` : "#fff"}
        stroke={kind === "hatch" ? "#4c7300" : "#000"}
        strokeWidth={line}
      />
      {kind === "hatch" && <path d={large ? "M3 6l3-3M13 13l10-10M30 13l6-6" : "M4 9l5-6"} stroke="#000" />}
    </Svg>
  );
};

const layers = [
  {
    name: "Grundstücke_neu_CT_PT",
    on: true,
    symbol: (
      <Svg w={17} h={12}>
        <Marker x={7} y={7} fill={RED} />
      </Svg>
    ),
  },
  {
    name: "Grundstücke_CT_PT",
    on: true,
    selected: true,
    symbol: (
      <Svg w={17} h={12}>
        <Marker x={7} y={7} fill={GREEN} />
      </Svg>
    ),
  },
  {
    name: "Grundstücke_neu_CT_L",
    on: true,
    symbol: (
      <Svg w={17} h={4}>
        <path d="M1 2h14" stroke="#ff3c14" strokeWidth="2" />
      </Svg>
    ),
  },
  {
    name: "Grundstücke_CT_L",
    on: true,
    symbol: (
      <Svg w={17} h={4}>
        <path d="M1 2.500h15" stroke="#1f9a00" strokeWidth="3" />
      </Svg>
    ),
  },
  { name: "Grundstücke", on: false, symbol: <Swatch kind="hatch" /> },
  { name: "Grundstücke_neu", on: false, symbol: <Swatch kind="dots" /> },
];

const greenPoints = [
  [75, 178],
  [76, 193],
  [80, 291],
  [84, 357],
  [125, 289],
  [176, 242],
  [197, 222],
];

const redPoints = [
  [217, 415],
  [249, 379],
  [270, 358],
  [282, 354],
  [292, 358],
  [312, 388],
  [318, 417],
  [312, 461],
  [305, 489],
];

const toPath = (points: number[][]) => points.map((p) => p.join(",")).join(" ");

const MapDrawing = () => (
  <Svg w={860} h={530}>
    <polyline points={toPath(greenPoints)} stroke="#1f9a00" strokeWidth="3" />
    <polygon points={toPath(redPoints)} stroke="#ff3c14" strokeWidth="2" />
    <path d="M626 318l12-12 98 51-12 40" stroke="#1f9a00" strokeWidth="3" />
    <path d="M626 318l98 79" stroke="#ff3c14" strokeWidth="2" />
    {[...greenPoints, [638, 306], [736, 357]].map(([x, y]) => (
      <Marker key={`${x}-${y}`} x={x} y={y} fill={GREEN} />
    ))}
    {redPoints.map(([x, y]) => (
      <Marker key={`${x}-${y}`} x={x} y={y} fill={RED} />
    ))}
  </Svg>
);

export default function App() {
  return (
    <>
      <GlobalStyle />
      <Window>
        <TitleBar>
          {icons.app}
          <Title>GeoOffice analyst - Layervergleich.mxd</Title>
          <WindowButtons>
            <WindowButton aria-label="Minimieren">
              <Svg w={12} h={10}>
                <rect x="1" y="5.500" width="10" height="4" rx="1" fill="#fff" stroke="#4d5a72" />
              </Svg>
            </WindowButton>
            <WindowButton aria-label="Maximieren">
              <Svg w={12} h={10}>
                <path d="M1.500.5h9v8h-9z" fill="#fff" stroke="#4d5a72" />
                <path d="M4.500 3.500h3v2h-3z" fill="#9bb6d6" stroke="#4d5a72" />
              </Svg>
            </WindowButton>
            <WindowButton $close aria-label="Schließen">
              <Svg w={12} h={10}>
                <path d="M2 1l8 8M10 1L2 9" stroke="#4d3a52" strokeWidth="4" />
                <path d="M2.500 1.500l7 7M9.500 1.500l-7 7" stroke="#fff" strokeWidth="2.400" />
              </Svg>
            </WindowButton>
          </WindowButtons>
        </TitleBar>

        <Client>
          <MenuBar>
            {menus.map((menu) => (
              <MenuItem key={menu}>{menu}</MenuItem>
            ))}
          </MenuBar>

          <Bar role="toolbar" aria-label="Standard">
            <Grip />
            <Tools items={fileTools} />
            <Combo $size="scale">
              <ComboSelect aria-label="Kartenmaßstab">
                <option>1:958</option>
              </ComboSelect>
              <ComboArrow>
                <Down />
              </ComboArrow>
            </Combo>
            <Tools items={navTools} active="zoomIn" />
            <Overflow />
          </Bar>

          <Bar role="toolbar" aria-label="Analyst">
            <Grip />
            <TextMenu>
              Analyst
              <Down small />
            </TextMenu>
            <Tools items={analystTools} />
            <Overflow />
          </Bar>

          <Workspace>
            <Contents>
              <PanelHeader>
                <PanelTitle>Inhaltsverzeichnis</PanelTitle>
                <PanelButton aria-label="Anheften">
                  <Svg w={10} h={10}>
                    <path d="M3 .5h4v5H3zM1 5.500h8M5 6v4M6.500 1v4" stroke="#33475f" />
                  </Svg>
                </PanelButton>
                <PanelButton aria-label="Schließen">
                  <Svg w={10} h={10}>
                    <path d="M1.500 1.500l7 7M8.500 1.500l-7 7" stroke="#33475f" strokeWidth="1.500" />
                  </Svg>
                </PanelButton>
              </PanelHeader>
              <PanelTools>
                <Tools items={tocTools} active="tocOrder" />
              </PanelTools>
              <TreeBox>
                <TreeAnchor>
                  <TreeRow $level={0}>
                    <Expander aria-label="Layer einklappen" />
                    {icons.layers}
                    <GroupName>Layer</GroupName>
                  </TreeRow>
                  <List>
                    {layers.map((layer) => (
                      <li key={layer.name}>
                        <TreeRow $level={1}>
                          <Expander aria-label={`${layer.name} einklappen`} />
                          <Check type="checkbox" id={layer.name} defaultChecked={layer.on} />
                          <LayerName htmlFor={layer.name} $selected={layer.selected}>
                            {layer.name}
                          </LayerName>
                        </TreeRow>
                        <SymbolRow>{layer.symbol}</SymbolRow>
                      </li>
                    ))}
                  </List>
                  <Callout $x={105} $y={83}>
                    13
                  </Callout>
                </TreeAnchor>
              </TreeBox>
            </Contents>

            <MapPane>
              <MapRow>
                <MapCanvas>
                  <MapDrawing />
                  <Callout $x={116} $y={227}>
                    14
                  </Callout>
                  <Callout $x={281} $y={423}>
                    14
                  </Callout>
                  <Callout $x={680} $y={345}>
                    14
                  </Callout>
                  <Legend>
                    Legende:
                    <LegendRow>
                      <Swatch kind="hatch" large />
                      Grundstücke alt
                    </LegendRow>
                    <LegendRow>
                      <Swatch kind="dots" large />
                      Grundstücke neu
                    </LegendRow>
                  </Legend>
                </MapCanvas>
                <VScroll>
                  <ScrollArrow aria-label="Nach oben">
                    <Svg w={7} h={4}>
                      <path d="M0 4h7L3.500 0z" fill="#333" />
                    </Svg>
                  </ScrollArrow>
                  <Track $grow={257} />
                  <Thumb $vertical aria-label="Vertikal scrollen" />
                  <Track $grow={226} />
                  <ScrollArrow aria-label="Nach unten">
                    <Down />
                  </ScrollArrow>
                </VScroll>
              </MapRow>
              <MapFooter>
                <ViewButton $active aria-label="Datenansicht">
                  <Svg w={9} h={9}>
                    <path d="M.5.500h8v8h-8z" fill="#b9dd8c" stroke="#2b4a2b" />
                    <path d="M1.500 7.500l6-6" stroke="#fff6a0" strokeWidth="2" />
                  </Svg>
                </ViewButton>
                <ViewButton aria-label="Layoutansicht">
                  <Svg w={9} h={9}>
                    <path d="M1.500.5h4l2 2v6h-6z" fill="#fff" stroke="#222" />
                    <path d="M3 4h3M3 6h3" stroke="#2d62a0" />
                  </Svg>
                </ViewButton>
                <FooterDivider />
                <ViewButton aria-label="Aktualisieren">
                  <Svg w={10} h={10}>
                    <path d="M1.500 4.500c0-3 4-4.500 6-2M8.500 5.500c0 3-4 4.500-6 2" stroke="#1d4f8c" strokeWidth="1.200" />
                    <path d="M9 .5v3.500H5.500zM1 9.500V6h3.500z" fill="#1d4f8c" />
                  </Svg>
                </ViewButton>
                <ViewButton aria-label="Anhalten">
                  <Svg w={7} h={7}>
                    <path d="M1.500 0v7M5.500 0v7" stroke="#2468b5" strokeWidth="2" />
                  </Svg>
                </ViewButton>
                <ScrollArrow aria-label="Nach links">
                  <Svg w={4} h={7}>
                    <path d="M4 0v7L0 3.500z" fill="#222" />
                  </Svg>
                </ScrollArrow>
                <Track $grow={485} />
                <Thumb aria-label="Horizontal scrollen" />
                <Track $grow={266} />
                <ScrollArrow aria-label="Nach rechts">
                  <Svg w={4} h={7}>
                    <path d="M0 0v7l4-3.500z" fill="#222" />
                  </Svg>
                </ScrollArrow>
                <ScrollCorner />
              </MapFooter>
            </MapPane>
          </Workspace>

          <DrawBar role="toolbar" aria-label="Zeichnen">
            <Grip />
            <TextMenu $wide>
              Zeichnen
              <Down small />
            </TextMenu>
            <Tools items={drawTools} />
            <Combo $size="font" $hot>
              <ComboIcon>{icons.openType}</ComboIcon>
              <ComboSelect $indent aria-label="Schriftart">
                <option>Arial</option>
              </ComboSelect>
              <ComboArrow>
                <Down />
              </ComboArrow>
              <Pointer>
                <Svg w={12} h={20}>
                  <path d="M.5 1v15l3.500-3.500L6.500 18l2.500-1-2.500-5.500h5z" fill="#fff" stroke="#1c1c3c" />
                </Svg>
              </Pointer>
            </Combo>
            <Combo $size="size">
              <ComboSelect aria-label="Schriftgröße">
                <option>10</option>
              </ComboSelect>
              <ComboArrow>
                <Down />
              </ComboArrow>
            </Combo>
            <ToolButton aria-label="Fett">
              <Letter $kind="b">B</Letter>
            </ToolButton>
            <ToolButton aria-label="Kursiv">
              <Letter $kind="i">I</Letter>
            </ToolButton>
            <ToolButton aria-label="Unterstrichen">
              <Letter $kind="u">U</Letter>
            </ToolButton>
            <Divider />
            <Tools items={colorTools} wide />
            <Overflow />
          </DrawBar>

          <StatusBar>
            <StatusText>Schriftart ändern</StatusText>
            <Coordinates>-43246,12  263018,818 Meter</Coordinates>
            <Svg w={11} h={11}>
              <path d="M9 1h2v2H9zM9 5h2v2H9zM9 9h2v2H9zM5 5h2v2H5zM5 9h2v2H5zM1 9h2v2H1z" fill="#bbb" />
            </Svg>
          </StatusBar>
        </Client>
      </Window>
    </>
  );
}
